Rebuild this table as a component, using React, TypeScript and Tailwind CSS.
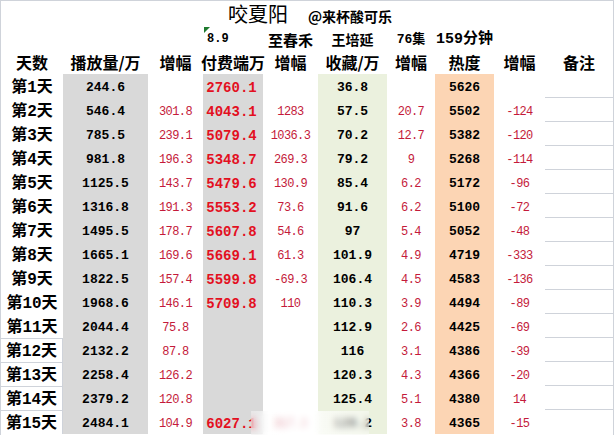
import React from 'react'

type Row = {
  day: string
  play: string
  playUp: string
  paid: string
  paidUp: string
  fav: string
  favUp: string
  heat: string
  heatUp: string
}

const rows: Row[] = [
  { day: '第1天', play: '244.6', playUp: '', paid: '2760.1', paidUp: '', fav: '36.8', favUp: '', heat: '5626', heatUp: '' },
  { day: '第2天', play: '546.4', playUp: '301.8', paid: '4043.1', paidUp: '1283', fav: '57.5', favUp: '20.7', heat: '5502', heatUp: '-124' },
  { day: '第3天', play: '785.5', playUp: '239.1', paid: '5079.4', paidUp: '1036.3', fav: '70.2', favUp: '12.7', heat: '5382', heatUp: '-120' },
  { day: '第4天', play: '981.8', playUp: '196.3', paid: '5348.7', paidUp: '269.3', fav: '79.2', favUp: '9', heat: '5268', heatUp: '-114' },
  { day: '第5天', play: '1125.5', playUp: '143.7', paid: '5479.6', paidUp: '130.9', fav: '85.4', favUp: '6.2', heat: '5172', heatUp: '-96' },
  { day: '第6天', play: '1316.8', playUp: '191.3', paid: '5553.2', paidUp: '73.6', fav: '91.6', favUp: '6.2', heat: '5100', heatUp: '-72' },
  { day: '第7天', play: '1495.5', playUp: '178.7', paid: '5607.8', paidUp: '54.6', fav: '97', favUp: '5.4', heat: '5052', heatUp: '-48' },
  { day: '第8天', play: '1665.1', playUp: '169.6', paid: '5669.1', paidUp: '61.3', fav: '101.9', favUp: '4.9', heat: '4719', heatUp: '-333' },
  { day: '第9天', play: '1822.5', playUp: '157.4', paid: '5599.8', paidUp: '-69.3', fav: '106.4', favUp: '4.5', heat: '4583', heatUp: '-136' },
  { day: '第10天', play: '1968.6', playUp: '146.1', paid: '5709.8', paidUp: '110', fav: '110.3', favUp: '3.9', heat: '4494', heatUp: '-89' },
  { day: '第11天', play: '2044.4', playUp: '75.8', paid: '', paidUp: '', fav: '112.9', favUp: '2.6', heat: '4425', heatUp: '-69' },
  { day: '第12天', play: '2132.2', playUp: '87.8', paid: '', paidUp: '', fav: '116', favUp: '3.1', heat: '4386', heatUp: '-39' },
  { day: '第13天', play: '2258.4', playUp: '126.2', paid: '', paidUp: '', fav: '120.3', favUp: '4.3', heat: '4366', heatUp: '-20' },
  { day: '第14天', play: '2379.2', playUp: '120.8', paid: '', paidUp: '', fav: '125.4', favUp: '5.1', heat: '4380', heatUp: '14' },
  { day: '第15天', play: '2484.1', playUp: '104.9', paid: '6027.1', paidUp: '317.3', fav: '129.2', favUp: '3.8', heat: '4365', heatUp: '-15' }
]

const headers = ['天数', '播放量/万', '增幅', '付费端万', '增幅', '收藏/万', '增幅', '热度', '增幅', '备注']

const cell = 'flex items-center justify-center leading-none whitespace-nowrap'
const data = 'flex items-center justify-center leading-none whitespace-nowrap pt-[3px]'
const black = "font-['Liberation_Mono',monospace] font-bold text-[13px] text-black"
const thinRed = "font-['Liberation_Mono',monospace] text-[12px] tracking-[-0.6px] text-[#c41a3a]"
const boldRed = "font-['Liberation_Mono',monospace] font-bold text-[14px] text-[#e3101f]"

export default function App() {
  return (
    <div className="relative w-[614px] h-[435px] overflow-hidden bg-white border-l border-t border-r border-[#cfd3da] font-['Noto_Sans_CJK_SC',sans-serif]">
      {/* title */}
      <div className="h-[25px] flex items-center pl-[227px]">
        <span className="text-[20px] leading-none text-black">咬夏阳</span>
        <span className="ml-[20px] mt-[4px] text-[14px] font-bold leading-none text-black">@来杯酸可乐</span>
      </div>

      {/* info row */}
      <div className="h-[24px] grid grid-cols-[62px_85px_55px_60px_55px_69px_48px_59px_51px_68px]">
        <div />
        <div />
        <div />
        <div className="relative flex items-center pl-[4px] pt-[2px]">
          <svg className="absolute left-[1px] top-[1px]" width="6" height="6" viewBox="0 0 6 6">
            <polygon points="0,0 6,0 0,6" fill="#1e7a2e" />
          </svg>
          <span className="font-['Liberation_Mono',monospace] font-bold text-[12px] leading-none text-black">8.9</span>
        </div>
        <div className={`${cell} text-[15px] font-bold text-black pt-[2px]`}>至春禾</div>
        <div className={`${cell} text-[14px] font-bold text-black pt-[2px]`}>王培延</div>
        <div className={`${cell} font-['Liberation_Mono','Noto_Sans_CJK_SC',monospace] text-[13px] font-bold text-black pt-[2px]`}>76集</div>
        <div className={`${cell} font-['Liberation_Mono','Noto_Sans_CJK_SC',monospace] text-[15px] font-bold text-black pt-[2px]`}>159分钟</div>
        <div />
        <div />
      </div>

      {/* header row */}
      <div className="h-[24px] grid grid-cols-[62px_85px_55px_60px_55px_69px_48px_59px_51px_68px]">
        {headers.map((h, i) => (
          <div key={i} className={`${cell} text-[16px] font-bold text-black`}>
            {h}
          </div>
        ))}
      </div>

      {/* data rows */}
      {rows.map((r, i) => {
        const boxed = i >= 11
        return (
          <div key={r.day} className="h-[24px] grid grid-cols-[62px_85px_55px_60px_55px_69px_48px_59px_51px_68px]">
            <div
              className={`${data} font-['Liberation_Mono','Noto_Sans_CJK_SC',monospace] text-[16px] font-bold text-black ${
                boxed ? 'border-t border-r border-[#cfd3da]' : ''
              }`}
            >
              {r.day}
            </div>
            <div className={`${data} ${black} bg-[#d9d9d9]`}>{r.play}</div>
            <div className={`${data} ${thinRed}`}>{r.playUp}</div>
            <div className={`${data} ${boldRed} bg-[#d9d9d9] pr-[3px]`}>{r.paid}</div>
            <div className={`${data} ${thinRed}`}>{r.paidUp}</div>
            <div className={`${data} ${black} bg-[#ebf1de]`}>{r.fav}</div>
            <div className={`${data} ${thinRed}`}>{r.favUp}</div>
            <div className={`${data} ${black} bg-[#fcd5b4]`}>{r.heat}</div>
            <div className={`${data} ${thinRed}`}>{r.heatUp}</div>
            <div className={i < 14 ? 'border-b border-[#cfd3da]' : ''} />
          </div>
        )
      })}

      {/* blurred watermark over the last row */}
      <div className="absolute left-[250px] bottom-0 w-[118px] h-[24px] backdrop-blur-[3px] bg-gradient-to-r from-white/40 via-white/75 to-white/40" />
    </div>
  )
}
